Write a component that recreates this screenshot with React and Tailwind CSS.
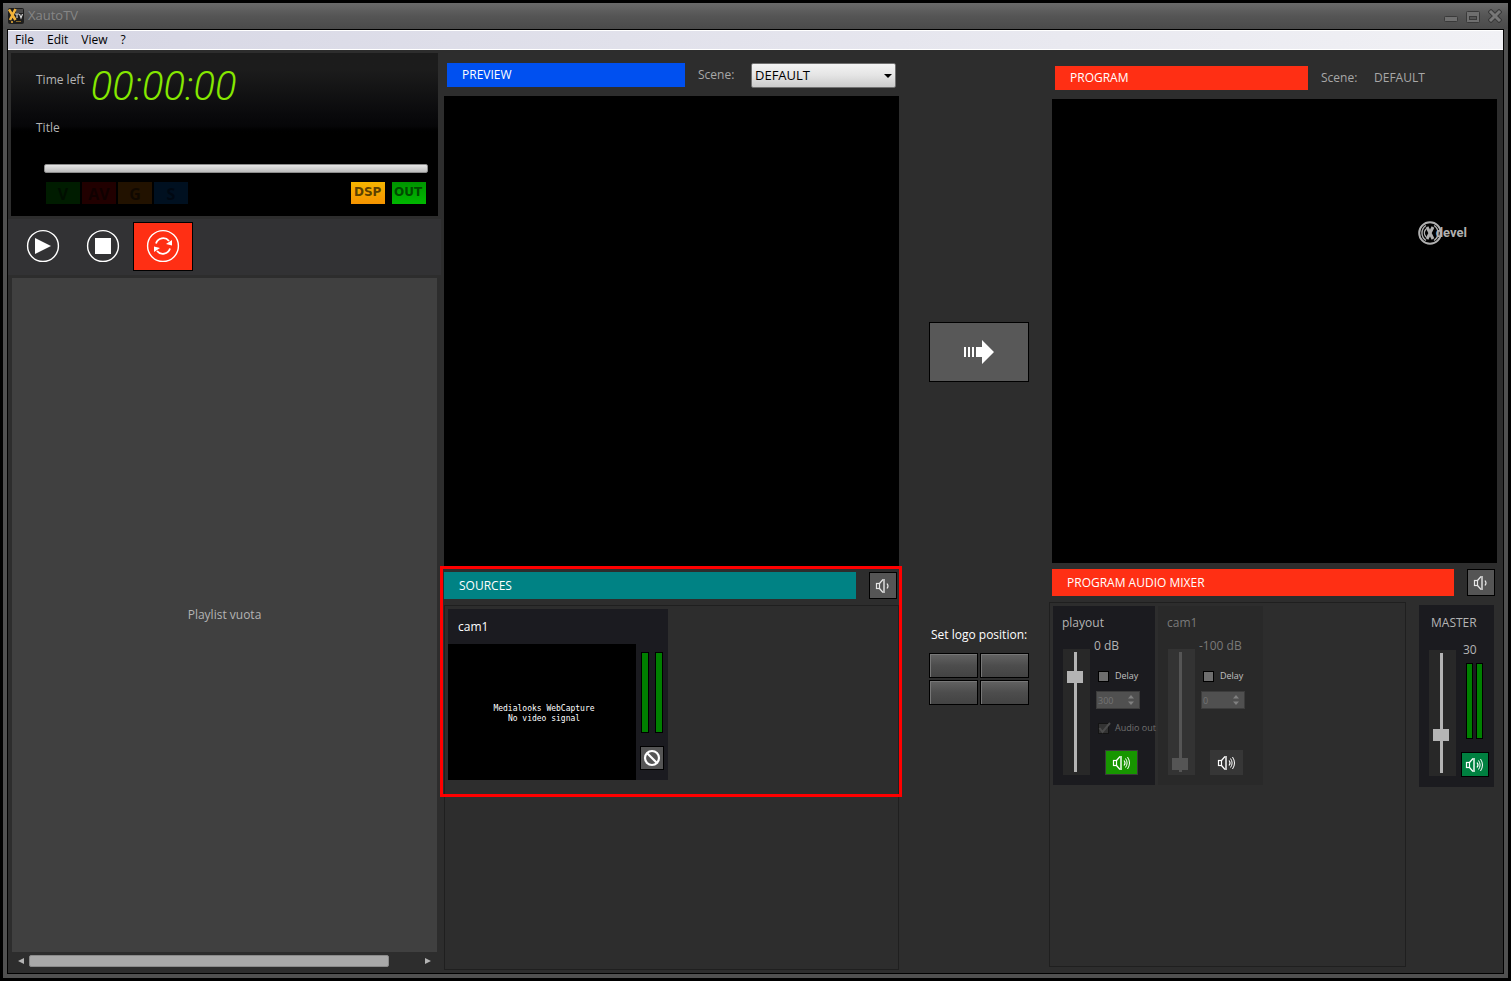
import { useState } from 'react';
import clsx from 'clsx';

function SpeakerIcon({ waves = 1, className }) {
  return (
    <svg viewBox="0 0 20 18" className={className} fill="none" stroke="currentColor">
      <rect x="1.500" y="6.500" width="3" height="5" strokeWidth="1.200" />
      <path d="M4.500 6.500 8 2.500M4.500 11.500 8 15.500" strokeWidth="1.200" />
      <path d="M9 2v14" strokeOpacity="0.700" strokeWidth="2" />
      <path d="M12 6.500q2 2.500 0 5" strokeWidth="1.200" />
      {waves > 1 && <path d="M13.500 4.500q3.200 4.500 0 9M15.500 3q4 6 0 12" strokeWidth="1" />}
    </svg>
  );
}

function MonitorButton({ label }) {
  return (
    <button
      type="button"
      aria-label={label}
      className="flex h-[27px] w-7 items-center justify-center border border-black bg-[#555555] pl-1 text-[#e6e6e6]"
    >
      <SpeakerIcon className="h-[18px] w-5" />
    </button>
  );
}

function Fader({ label, value, muted = false }) {
  const [level, setLevel] = useState(value);
  return (
    <div className={clsx('h-[126px] w-[27px] py-[3px] pl-1', muted ? 'bg-[#333333]' : 'bg-[#282828]')}>
      <input
        type="range"
        aria-label={label}
        value={level}
        onChange={(e) => setLevel(Number(e.target.value))}
        className={clsx(
          'm-0 block h-[120px] w-4 appearance-none bg-[length:3px_100%] bg-center bg-no-repeat [direction:rtl] [writing-mode:vertical-lr]',
          '[&::-webkit-slider-thumb]:h-3 [&::-webkit-slider-thumb]:w-4 [&::-webkit-slider-thumb]:appearance-none',
          muted
            ? 'bg-[linear-gradient(#555555,#555555)] [&::-webkit-slider-thumb]:bg-[#555555]'
            : 'bg-[linear-gradient(#b4b4b4,#b4b4b4)] [&::-webkit-slider-thumb]:bg-[#b4b4b4]'
        )}
      />
    </div>
  );
}

function TitleBar() {
  return (
    <header className="flex h-[26px] items-center bg-linear-to-b from-[#6a6a6a] via-[#555555] to-[#4b4b4b] pr-1.5 pl-[5px]">
      <svg viewBox="0 0 16 16" className="size-4">
        <rect width="16" height="16" rx="2" fill="#1d1d1d" />
        <path d="M8 1h7v4H8z" fill="#4a4a4a" />
        <path d="M1 1.500 7.500 12M7.500 1 2 12" stroke="#f3b43a" strokeWidth="2.600" />
        <path d="M7 6h4M9 6v4M11.500 6l1.500 4 1.500-4" stroke="#d8d8d8" strokeWidth="1.100" fill="none" />
        <circle cx="4" cy="14" r="1" fill="#f3b43a" />
        <path d="M8 13.500h5" stroke="#8a6a2a" />
      </svg>
      <h1 className="ml-1 flex-1 text-[13px] text-[#868686]">XautoTV</h1>
      <div className="flex gap-2">
        <button type="button" aria-label="Minimize">
          <svg viewBox="0 0 14 14" className="size-3.5">
            <rect x="0.500" y="7.500" width="13" height="5" rx="1" fill="#6f6f6f" stroke="#3a3a3a" />
          </svg>
        </button>
        <button type="button" aria-label="Maximize">
          <svg viewBox="0 0 14 14" className="size-3.5" stroke="#3a3a3a">
            <rect x="0.500" y="2.500" width="13" height="11" rx="1" fill="#6f6f6f" />
            <rect x="3.500" y="7.500" width="7" height="3" fill="#555555" />
          </svg>
        </button>
        <button type="button" aria-label="Close">
          <svg viewBox="0 0 14 14" className="size-3.5">
            <path d="m3 3 8 8m0-8-8 8" stroke="#3a3a3a" strokeWidth="5" strokeLinecap="square" />
            <path d="m3 3 8 8m0-8-8 8" stroke="#787878" strokeWidth="3" strokeLinecap="square" />
          </svg>
        </button>
      </div>
    </header>
  );
}

function MenuBar() {
  return (
    <nav className="flex h-5 items-center gap-[13px] border-y border-white bg-linear-to-r from-[#d6d6e4] to-[#f1f1f5] pl-[7px] text-xs text-black">
      <button type="button">File</button>
      <button type="button">Edit</button>
      <button type="button">View</button>
      <button type="button">?</button>
    </nav>
  );
}

function Clock() {
  return (
    <time className="pt-1 font-['Roboto','Liberation_Sans',sans-serif] text-[40px] leading-[44px] font-light text-[#86e800] italic">
      00:00:00
    </time>
  );
}

const tags = [
  { name: 'V', className: 'bg-[#001c00] text-[#000e00]' },
  { name: 'AV', className: 'bg-[#210000] text-[#100000]' },
  { name: 'G', className: 'bg-[#221200] text-[#100800]' },
  { name: 'S', className: 'bg-[#001020] text-[#000812]' },
];

function Display() {
  return (
    <section className="flex h-[163px] flex-col bg-linear-to-b from-[#1c1c1c] from-10% via-[#060608] via-45% to-black to-50% pt-2 pr-2.5 pl-[25px] text-xs text-[#b4b4b4]">
      <div className="flex h-12 items-center gap-1.5">
        <span className="pb-2.5">Time left</span>
        <Clock />
      </div>
      <p className="mt-[11px]">Title</p>
      <div className="mt-7 ml-2 flex flex-col gap-[9px]">
        <div
          role="progressbar"
          aria-label="Playback position"
          aria-valuenow={0}
          className="h-[9px] rounded-xs border border-[#8c8c8c] bg-linear-to-b from-[#e6e6e6] to-[#bdbdbd]"
        />
        <div className="flex items-center pr-0.5 pl-0.5">
          <div className="flex flex-1 gap-0.5 text-base font-bold">
            {tags.map((t) => (
              <span key={t.name} className={clsx('h-[22px] w-[34px] text-center leading-6', t.className)}>
                {t.name}
              </span>
            ))}
          </div>
          <div className="flex gap-[7px] font-['DejaVu_Sans',sans-serif] text-xs leading-5 font-bold">
            <span className="h-[22px] w-[34px] bg-linear-to-b from-[#f5b400] to-[#f59300] pl-[3px] text-[#5c4000]">DSP</span>
            <span className="h-[22px] w-[34px] bg-linear-to-b from-[#009400] to-[#00b800] pl-0.5 text-[#004a00]">OUT</span>
          </div>
        </div>
      </div>
    </section>
  );
}

function Transport() {
  const [loop, setLoop] = useState(true);
  return (
    <div className="mt-[3px] flex h-14 items-start bg-[#323234] pt-[3px] pl-[5px]">
      <button type="button" aria-label="Play" className="flex h-12 w-[60px] items-center justify-center">
        <svg viewBox="0 0 34 34" className="size-[34px]">
          <circle cx="17" cy="17" r="15.400" fill="none" stroke="#fff" strokeWidth="1.400" />
          <path d="M9 9v16l16-8z" fill="#fff" />
        </svg>
      </button>
      <button type="button" aria-label="Stop" className="flex h-12 w-[60px] items-center justify-center">
        <svg viewBox="0 0 34 34" className="size-[34px]">
          <circle cx="17" cy="17" r="15.400" fill="none" stroke="#fff" strokeWidth="1.400" />
          <rect x="9" y="9" width="16" height="16" fill="#fff" />
        </svg>
      </button>
      <button
        type="button"
        aria-label="Loop"
        aria-pressed={loop}
        onClick={() => setLoop(!loop)}
        className={clsx('flex h-[49px] w-[60px] justify-center border pt-1.5', loop ? 'border-black bg-[#ff2f14]' : 'border-transparent')}
      >
        <svg viewBox="0 0 34 34" className="size-[34px]" fill="none" stroke="#fff">
          <circle cx="17" cy="17" r="15.400" strokeWidth="1.400" />
          <path d="M10 14.500a7.500 7.500 0 0 1 13-2.500M24 19.500a7.500 7.500 0 0 1-13 2.500" strokeWidth="1.800" />
          <path d="M26 11v5.500l-6-1.500zM8 23v-5.500l6 1.500z" fill="#fff" stroke="none" />
        </svg>
      </button>
    </div>
  );
}

function Playlist() {
  return (
    <section className="mx-px mt-[3px] flex flex-1 flex-col">
      <div className="flex flex-1 items-center justify-center bg-[#404040] text-xs text-[#b4b4b4]">Playlist vuota</div>
      <div className="flex h-[18px] items-center px-1.5">
        <button type="button" aria-label="Scroll left">
          <svg viewBox="0 0 6 8" className="h-2 w-1.5">
            <path d="M6 1v6L0 4z" fill="#b4b4b4" />
          </svg>
        </button>
        <div className="mx-[5px] flex-1">
          <div className="h-3 w-[92%] rounded-xs border border-[#8a8a8a] bg-[#a9a9a9]" />
        </div>
        <button type="button" aria-label="Scroll right">
          <svg viewBox="0 0 6 8" className="h-2 w-1.5">
            <path d="M0 1v6l6-3z" fill="#b4b4b4" />
          </svg>
        </button>
      </div>
    </section>
  );
}

function Meters({ className, barClassName }) {
  return (
    <div className={clsx('flex', className)}>
      <div className={clsx('border border-black bg-[#008000]', barClassName)} />
      <div className={clsx('border border-black bg-[#008000]', barClassName)} />
    </div>
  );
}

function SourceCard() {
  return (
    <article className="w-[220px] bg-[#1b1b20] text-xs text-white">
      <h3 className="h-[35px] pl-2.5 leading-9">cam1</h3>
      <div className="flex h-[136px]">
        <div className="flex w-[188px] flex-col justify-center bg-black pt-1 pl-1 text-center font-['DejaVu_Sans_Mono',monospace] text-[8px] leading-[10px]">
          <p>Medialooks WebCapture</p>
          <p>No video signal</p>
        </div>
        <div className="flex flex-1 flex-col items-center pt-2">
          <Meters className="gap-1.5" barClassName="h-[81px] w-2" />
          <button
            type="button"
            aria-label="Disable cam1"
            className="mt-[13px] flex size-6 items-center justify-center border border-black bg-[#555555]"
          >
            <svg viewBox="0 0 18 18" className="size-[18px]" fill="none" stroke="#fff" strokeWidth="2.200">
              <circle cx="9" cy="9" r="7" />
              <path d="m4 4 10 10" />
            </svg>
          </button>
        </div>
      </div>
    </article>
  );
}

function PreviewColumn() {
  return (
    <section className="flex min-w-0 flex-col pl-[3px]">
      <div className="flex h-[46px] items-start pt-[13px] pr-[3px] pl-[3px] text-xs">
        <h2 className="h-6 flex-1 bg-[#0050f0] pl-[15px] leading-6 text-white">PREVIEW</h2>
        <label htmlFor="scene" className="ml-[13px] w-[53px] leading-6 text-[#a8a8a8]">
          Scene:
        </label>
        <div className="relative w-[145px]">
          <select
            id="scene"
            className="h-[25px] w-full appearance-none rounded-xs border border-[#707070] bg-linear-to-b from-[#f4f4f4] via-[#e4e4e4] to-[#cbcbcb] pt-px pl-[3px] text-[13px] text-black"
          >
            <option>DEFAULT</option>
          </select>
          <svg viewBox="0 0 8 4" className="pointer-events-none absolute top-[11px] right-1 h-1 w-2">
            <path d="M0 0h8L4 4z" fill="#000" />
          </svg>
        </div>
      </div>
      <div className="flex-[470] basis-0 bg-black" />
      <div className="relative flex flex-[398] basis-0 flex-col pt-1.5 pb-[3px]">
        <div className="flex gap-[13px] pr-0.5">
          <h2 className="h-[27px] flex-1 bg-[#008284] pl-[15px] text-xs leading-[27px] text-white">SOURCES</h2>
          <MonitorButton label="Monitor sources" />
        </div>
        <div className="mt-1.5 flex-1 border border-[#1f1f1f] p-[3px]">
          <SourceCard />
        </div>
        <div className="pointer-events-none absolute top-0 -right-[3px] -left-1 h-[231px] border-3 border-[#ff0000]" />
      </div>
    </section>
  );
}

const corners = ['Top left', 'Top right', 'Bottom left', 'Bottom right'];

function SwitchColumn() {
  return (
    <section className="flex flex-col items-center pt-[272px] pr-[20px] pl-[30px]">
      <button
        type="button"
        aria-label="Send preview to program"
        className="flex h-[60px] w-[100px] shrink-0 items-center justify-center border border-black bg-[#585858]"
      >
        <svg viewBox="0 0 32 26" className="h-[26px] w-8" fill="#fff">
          <path d="M1 8h2v10H1zM5 8h2v10H5zM9 8h2v10H9zM13 8h6V1l12 12-12 12v-7h-6z" />
        </svg>
      </button>
      <p className="mt-[244px] w-[100px] pl-0.5 text-xs leading-[18px] whitespace-nowrap text-white">Set logo position:</p>
      <div className="mt-[9px] grid w-[100px] grid-cols-2 gap-0.5">
        {corners.map((c) => (
          <button
            key={c}
            type="button"
            aria-label={c}
            className="h-[25px] border border-black bg-linear-to-b from-[#636363] from-0% via-[#4d4d4d] via-50% to-[#434343] inset-shadow-[1px_1px_0_#777777]"
          />
        ))}
      </div>
    </section>
  );
}

function CheckRow({ id, label, checked = false, disabled = false }) {
  const [on, setOn] = useState(checked);
  return (
    <div className="flex h-3 items-center pl-1">
      <div className="relative flex">
        <input
          id={id}
          type="checkbox"
          checked={on}
          disabled={disabled}
          onChange={() => setOn(!on)}
          className={clsx('size-[11px] appearance-none border', disabled ? 'border-[#141414] bg-[#333333]' : 'border-black bg-[#6e6e6e]')}
        />
        {on && (
          <svg viewBox="0 0 13 12" className="pointer-events-none absolute bottom-0 left-0 h-3 w-[13px]" fill="none">
            <path d="m1.500 6 3 4L12 1" stroke="#4c4c4c" strokeWidth="2" />
          </svg>
        )}
      </div>
      <label htmlFor={id} className={clsx('ml-1.5 text-[9px] leading-3 whitespace-nowrap', disabled ? 'text-[#707070]' : 'text-[#c0c0c0]')}>
        {label}
      </label>
    </div>
  );
}

function Channel({ name, db, level, delay, active, hasOutput }) {
  return (
    <article className={clsx('flex h-[179px] flex-col text-xs', active ? 'w-[102px] bg-[#1b1b1f] text-[#b4b4b4]' : 'w-[105px] bg-[#292929] text-[#7a7a7a]')}>
      <h3 className="h-[34px] pl-[9px] leading-[34px]">{name}</h3>
      <div className="flex pl-2.5">
        <div className="pt-[9px]">
          <Fader label={`${name} volume`} value={level} muted={!active} />
        </div>
        <div className="ml-1 flex flex-col">
          <p className="h-3 leading-3">{db} dB</p>
          <div className="mt-[18px]">
            <CheckRow id={`${name}-delay`} label="Delay" />
          </div>
          <div className="relative mt-[9px] ml-0.5 w-11">
            <input
              type="number"
              aria-label={`${name} delay`}
              defaultValue={delay}
              disabled
              className="block h-[18px] w-full appearance-none border border-[#3c3c3c] bg-[#505050] pl-px text-[9px] text-[#747474] [&::-webkit-inner-spin-button]:appearance-none"
            />
            <svg viewBox="0 0 6 12" className="pointer-events-none absolute top-[3px] right-1.5 h-3 w-1.5" fill="#808080">
              <path d="M0 4.500h6L3 1zM0 7.500h6L3 11z" />
            </svg>
          </div>
          <div className="mt-[13px] h-3">
            {hasOutput && <CheckRow id={`${name}-out`} label="Audio out" checked disabled />}
          </div>
          <button
            type="button"
            aria-label={`Mute ${name}`}
            className={clsx(
              'mt-4 ml-[11px] flex h-[25px] w-[33px] items-center justify-center border text-white',
              active ? 'border-[#3a3a3a] bg-[#179600]' : 'border-[#363636] bg-[#363636]'
            )}
          >
            <SpeakerIcon waves={3} className="h-[18px] w-5" />
          </button>
        </div>
      </div>
    </article>
  );
}

function MasterChannel() {
  return (
    <article className="mt-[3px] h-[182px] w-[75px] bg-[#1b1b1f] text-xs text-[#b4b4b4]">
      <h3 className="h-9 pl-3 leading-9">MASTER</h3>
      <div className="flex pl-2.5">
        <div className="pt-[9px]">
          <Fader label="Master volume" value={30} />
        </div>
        <div className="ml-[5px] flex flex-col">
          <p className="h-[18px] pl-0.5 leading-[18px]">30</p>
          <Meters className="mt-1 gap-[3px] pl-[5px]" barClassName="h-[76px] w-[7px]" />
          <button
            type="button"
            aria-label="Mute master"
            className="mt-[13px] flex h-[25px] w-7 items-center justify-center border border-black bg-[#008040] text-white"
          >
            <SpeakerIcon waves={3} className="h-[18px] w-5" />
          </button>
        </div>
      </div>
    </article>
  );
}

function Watermark() {
  return (
    <div className="absolute top-[122px] right-[30px] flex items-center text-[#b0b0b0]">
      <svg viewBox="0 0 24 24" className="size-6" fill="none" stroke="currentColor">
        <circle cx="12" cy="12" r="10.800" strokeWidth="2" />
        <path d="M8 4.500a9 9 0 0 0 0 15M16 4.500a9 9 0 0 1 0 15" strokeWidth="1.400" />
        <path d="M8 8a6 6 0 0 0 0 8" strokeWidth="1.400" />
        <path d="m9 6 6 12M15 6 9 18" strokeWidth="3" />
      </svg>
      <span className="-ml-1.5 font-['Roboto','Liberation_Sans',sans-serif] text-[13px] leading-6 font-bold">devel</span>
    </div>
  );
}

function ProgramColumn() {
  return (
    <section className="flex min-w-0 flex-col">
      <div className="flex h-[49px] items-start pt-4 pr-1.5 pl-1.5 text-xs leading-6 text-[#a8a8a8]">
        <h2 className="h-6 flex-1 bg-[#ff2f14] pl-[15px] text-white">PROGRAM</h2>
        <span className="ml-[13px] w-[53px]">Scene:</span>
        <span className="w-[123px]">DEFAULT</span>
      </div>
      <div className="relative mr-1.5 ml-[3px] flex-[464] basis-0 bg-black">
        <Watermark />
      </div>
      <div className="flex flex-[398] basis-0 flex-col pt-1.5 pb-1.5">
        <div className="flex gap-[13px] pr-2 pl-[3px]">
          <h2 className="h-[27px] flex-1 bg-[#ff2f14] pl-[15px] text-xs leading-[27px] text-white">PROGRAM AUDIO MIXER</h2>
          <MonitorButton label="Monitor program" />
        </div>
        <div className="mt-1.5 flex flex-1 gap-[13px] pr-[9px]">
          <div className="flex flex-1 items-start gap-[3px] border border-[#1f1f1f] p-[3px]">
            <Channel name="playout" db="0" level={82} delay={300} active hasOutput />
            <Channel name="cam1" db="-100" level={2} delay={0} />
          </div>
          <MasterChannel />
        </div>
      </div>
    </section>
  );
}

export default function App() {
  return (
    <div className="h-screen min-h-[860px] min-w-[1200px] bg-black p-[3px] font-['Open_Sans','Noto_Sans',sans-serif]">
      <div className="flex h-full flex-col bg-[#505050]">
        <TitleBar />
        <div className="mx-1 mb-1 flex flex-1 flex-col border border-black bg-[#2d2d2d]">
          <MenuBar />
          <main className="grid flex-1 grid-cols-[433px_minmax(0,458fr)_150px_minmax(0,454fr)]">
            <aside className="flex flex-col pt-[3px] pb-[3px]">
              <div className="pr-[3px] pl-[3px]">
                <Display />
              </div>
              <Transport />
              <div className="flex flex-1 flex-col pr-[3px] pl-[3px]">
                <Playlist />
              </div>
            </aside>
            <PreviewColumn />
            <SwitchColumn />
            <ProgramColumn />
          </main>
        </div>
      </div>
    </div>
  );
}
